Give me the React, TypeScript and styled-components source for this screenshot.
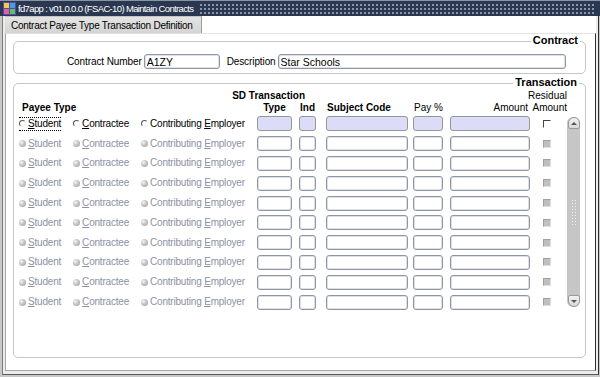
import { FC } from 'react';
import styled, { createGlobalStyle } from 'styled-components';

const GlobalStyle = createGlobalStyle`
  html, body { margin: 0; padding: 0; background: #ffffff; }
  body { font-family: "Liberation Sans", Arial, sans-serif; }
`;

const cols = '238px 42px 27px 87px 37px 80px 37px';

const Window = styled.div`
  width: 600px;
  height: 377px;
  display: flex;
  flex-direction: column;
  background: #c8c8c8;
  overflow: hidden;
`;

const TitleBar = styled.div`
  height: 16px;
  display: flex;
  align-items: center;
  background: #2a3750;
  border-top: 1px solid #8c94a4;
  box-sizing: border-box;
`;

const TitleIcon = styled.svg`
  width: 13px;
  height: 13px;
  margin: 0 2px 0 3px;
  flex: none;
`;

const TitleText = styled.span`
  color: #ffffff;
  font-size: 9.5px;
  letter-spacing: -0.65px;
  white-space: nowrap;
  padding-right: 6px;
`;

const TitleDots = styled.div`
  flex: 1;
  height: 11px;
  margin-right: 4px;
  background-image: radial-gradient(circle, #8d98ab 0.7px, transparent 1px);
  background-size: 4px 4px;
`;

const Body = styled.div`
  flex: 1;
  display: flex;
  padding: 0 1px 2px 2px;
`;

const Outer = styled.div`
  flex: 1;
  display: flex;
  flex-direction: column;
  border-left: 1px solid #7c7c7c;
  border-right: 1px solid #303030;
  border-bottom: 1px solid #5a5a5a;
  background: #ececec;
  padding: 0 2px 3px 2px;
`;

const TabStrip = styled.div`
  height: 17px;
  display: flex;
  margin-left: -2px;
  padding-left: 2px;
  background: linear-gradient(to right, #ececec 2px, #ffffff 2px);
`;

const Tab = styled.div`
  width: 197px;
  box-sizing: border-box;
  display: flex;
  align-items: center;
  padding-left: 6px;
  font-size: 10px;
  letter-spacing: -0.25px;
  white-space: nowrap;
  color: #000;
  background: linear-gradient(#e4e4e4, #d4d4d4);
  border-right: 1px solid #9c9c9c;
  border-top: 1px solid #c4c4c4;
`;

const Panel = styled.div`
  flex: 1;
  display: flex;
  flex-direction: column;
  gap: 9px;
  background: #ffffff;
  border: 1px solid #a8a8a8;
  border-top-color: #e2e2e2;
  border-right-color: #303030;
  padding: 7px 9px 12px 7px;
`;

const Frame = styled.div<{ $grow?: boolean }>`
  position: relative;
  border: 1px solid #c6c6c6;
  border-radius: 5px;
  flex: ${p => (p.$grow ? 1 : 'none')};
`;

const Legend = styled.span<{ $right: number }>`
  position: absolute;
  top: -8px;
  right: ${p => p.$right}px;
  background: #ffffff;
  padding: 0 2px;
  font-size: 11px;
  font-weight: bold;
  line-height: 13px;
  color: #000;
`;

const ContractRow = styled.div`
  display: flex;
  align-items: center;
  gap: 2px;
  padding: 12px 0 4px 53px;
`;

const Label = styled.span<{ $gap?: number }>`
  font-size: 10px;
  letter-spacing: -0.1px;
  color: #000;
  margin-left: ${p => p.$gap ?? 0}px;
`;

const Field = styled.input<{ $w: number; $active?: boolean }>`
  width: ${p => p.$w}px;
  height: 15px;
  box-sizing: border-box;
  padding: 0 2px;
  margin: 0;
  font-family: "Liberation Sans", Arial, sans-serif;
  font-size: 10.5px;
  color: #000;
  border: 1px solid #8f96a5;
  border-radius: 3px;
  box-shadow: inset 0 0 0 1px #dde0e6;
  background: ${p => (p.$active ? '#dcdcf8' : '#ffffff')};
  outline: none;
`;

const Table = styled.div`
  display: flex;
  padding: 5px 0 0 5px;
`;

const Grid = styled.div`
  display: flex;
  flex-direction: column;
`;

const HeadRow = styled.div<{ $h: number }>`
  display: grid;
  grid-template-columns: ${cols};
  height: ${p => p.$h}px;
  align-items: center;
`;

const Head = styled.span<{ $bold?: boolean; $col: string; $end?: boolean; $pad?: number }>`
  grid-column: ${p => p.$col};
  justify-self: ${p => (p.$end ? 'end' : 'start')};
  font-size: 10px;
  font-weight: ${p => (p.$bold ? 'bold' : 'normal')};
  color: #000;
  white-space: nowrap;
  ${p => (p.$end ? `padding-right: ${p.$pad ?? 0}px;` : `padding-left: ${p.$pad ?? 0}px;`)}
`;

const CenterHead = styled.span<{ $w: number }>`
  width: ${p => p.$w}px;
  text-align: center;
  font-size: 10px;
  font-weight: bold;
`;

const Row = styled.div`
  display: grid;
  grid-template-columns: ${cols};
  height: 19.8px;
  align-items: center;
`;

const Options = styled.div`
  display: flex;
  align-items: center;
  gap: 12px;
`;

const Option = styled.span<{ $active?: boolean; $focus?: boolean }>`
  display: inline-flex;
  align-items: center;
  gap: 2px;
  font-size: 10px;
  letter-spacing: -0.2px;
  color: ${p => (p.$active ? '#000' : '#8b92a2')};
  border-top: 1px dotted ${p => (p.$focus ? '#000' : 'transparent')};
  border-bottom: 1px dotted ${p => (p.$focus ? '#000' : 'transparent')};
  line-height: 12px;
  white-space: nowrap;
`;

const Radio = styled.span<{ $active?: boolean }>`
  width: 7px;
  height: 7px;
  box-sizing: border-box;
  border-radius: 50%;
  flex: none;
  ${p =>
    p.$active
      ? `border: 1px solid; border-color: #555 #f4f4f4 #f4f4f4 #555; background: #fff;`
      : `background: radial-gradient(circle at 35% 35%, #f4f4f4 0, #c4c4c4 45%, #9c9c9c 100%);`}
`;

const Check = styled.span<{ $active?: boolean }>`
  justify-self: start;
  margin-left: 13px;
  width: 8px;
  height: 8px;
  box-sizing: border-box;
  border: 1px solid;
  ${p =>
    p.$active
      ? `border-color: #444 #fff #fff #444; background: #fff;`
      : `border-color: #a0a0a0 #e0e0e0 #e0e0e0 #a0a0a0; background: #bfbfbf;`}
`;

const ScrollCol = styled.div`
  padding-top: 28px;
`;

const Track = styled.div`
  width: 13px;
  height: 190px;
  border-radius: 6px;
  background: #c6c6c6;
  display: flex;
  flex-direction: column;
  justify-content: space-between;
  align-items: center;
`;

const Arrow = styled.div<{ $down?: boolean }>`
  width: 12px;
  height: 12px;
  box-sizing: border-box;
  border: 1px solid #9a9a9a;
  border-radius: ${p => (p.$down ? '2px 2px 6px 6px' : '6px 6px 2px 2px')};
  background: linear-gradient(#f2f2f2, #d8d8d8);
  display: flex;
  align-items: center;
  justify-content: center;
  &::after {
    content: '';
    border-left: 3px solid transparent;
    border-right: 3px solid transparent;
    ${p => (p.$down ? 'border-top: 3px solid #555;' : 'border-bottom: 3px solid #555;')}
  }
`;

const Grip = styled.div`
  width: 6px;
  height: 26px;
  background-image: radial-gradient(circle, #f0f0f0 0.7px, transparent 1px);
  background-size: 3px 3px;
`;

const U: FC<{ text: string; at: number }> = ({ text, at }) => (
  <span>
    {text.slice(0, at)}
    <u>{text[at]}</u>
    {text.slice(at + 1)}
  </span>
);

const rows = Array.from({ length: 10 }, (_, i) => i === 0);

export default function App() {
  return (
    <Window>
      <GlobalStyle />
      <TitleBar>
        <TitleIcon viewBox="0 0 13 13">
          <rect x="0" y="0" width="13" height="13" fill="#5a4aa8" />
          <rect x="1" y="1" width="5" height="5" fill="#f0d040" />
          <rect x="7" y="1" width="5" height="5" fill="#40a0e0" />
          <rect x="1" y="7" width="5" height="5" fill="#e060a0" />
          <rect x="7" y="7" width="5" height="5" fill="#60c060" />
        </TitleIcon>
        <TitleText>fd7app : v01.0.0.0 (FSAC-10) Maintain Contracts</TitleText>
        <TitleDots />
      </TitleBar>
      <Body>
        <Outer>
          <TabStrip>
            <Tab>Contract Payee Type Transaction Definition</Tab>
          </TabStrip>
          <Panel>
            <Frame>
              <Legend $right={5}>Contract</Legend>
              <ContractRow>
                <Label>Contract Number</Label>
                <Field $w={76} readOnly defaultValue="A1ZY" />
                <Label $gap={5}>Description</Label>
                <Field $w={288} readOnly defaultValue="Star Schools" />
              </ContractRow>
            </Frame>
            <Frame $grow>
              <Legend $right={6}>Transaction</Legend>
              <Table>
                <Grid>
                  <HeadRow $h={12}>
                    <Head $bold $col="1 / 4" $end $pad={21}>SD Transaction</Head>
                    <Head $col="7" $end>Residual</Head>
                  </HeadRow>
                  <HeadRow $h={13}>
                    <Head $bold $col="1" $pad={3}>Payee Type</Head>
                    <CenterHead $w={35}>Type</CenterHead>
                    <CenterHead $w={17}>Ind</CenterHead>
                    <Head $bold $col="4" $pad={1}>Subject Code</Head>
                    <Head $col="5" $pad={1}>Pay %</Head>
                    <Head $col="6" $end $pad={2}>Amount</Head>
                    <Head $col="7" $end>Amount</Head>
                  </HeadRow>
                  {rows.map((active, i) => (
                    <Row key={i}>
                      <Options>
                        <Option $active={active} $focus={active}>
                          <Radio $active={active} />
                          <U text="Student" at={0} />
                        </Option>
                        <Option $active={active}>
                          <Radio $active={active} />
                          <U text="Contractee" at={0} />
                        </Option>
                        <Option $active={active}>
                          <Radio $active={active} />
                          <U text="Contributing Employer" at={13} />
                        </Option>
                      </Options>
                      <Field $w={35} $active={active} readOnly />
                      <Field $w={17} $active={active} readOnly />
                      <Field $w={82} $active={active} readOnly />
                      <Field $w={30} $active={active} readOnly />
                      <Field $w={80} $active={active} readOnly />
                      <Check $active={active} />
                    </Row>
                  ))}
                </Grid>
                <ScrollCol>
                  <Track>
                    <Arrow />
                    <Grip />
                    <Arrow $down />
                  </Track>
                </ScrollCol>
              </Table>
            </Frame>
          </Panel>
        </Outer>
      </Body>
    </Window>
  );
}
